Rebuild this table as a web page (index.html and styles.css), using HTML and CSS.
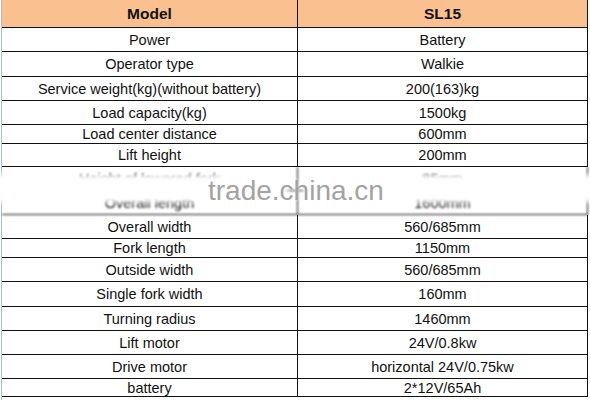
FILE: index.html
```html
<!DOCTYPE html>
<html>
<head>
<meta charset="utf-8">
<link rel="stylesheet" href="styles.css">
</head>
<body>
<div class="sheet">
  <div class="grid">
    <div class="cell head">Model</div><div class="cell head r">SL15</div>
    <div class="cell">Power</div><div class="cell r">Battery</div>
    <div class="cell">Operator type</div><div class="cell r">Walkie</div>
    <div class="cell">Service weight(kg)(without battery)</div><div class="cell r">200(163)kg</div>
    <div class="cell">Load capacity(kg)</div><div class="cell r">1500kg</div>
    <div class="cell">Load center distance</div><div class="cell r">600mm</div>
    <div class="cell">Lift height</div><div class="cell r">200mm</div>
    <div class="cell soft">Height of lowered fork</div><div class="cell r soft">85mm</div>
    <div class="cell soft">Overall length</div><div class="cell r soft">1600mm</div>
    <div class="cell">Overall width</div><div class="cell r">560/685mm</div>
    <div class="cell">Fork length</div><div class="cell r">1150mm</div>
    <div class="cell">Outside width</div><div class="cell r">560/685mm</div>
    <div class="cell">Single fork width</div><div class="cell r">160mm</div>
    <div class="cell">Turning radius</div><div class="cell r">1460mm</div>
    <div class="cell">Lift motor</div><div class="cell r">24V/0.8kw</div>
    <div class="cell">Drive motor</div><div class="cell r">horizontal 24V/0.75kw</div>
    <div class="cell">battery</div><div class="cell r">2*12V/65Ah</div>
  </div>
  <div class="haze haze-left"></div>
  <div class="haze haze-right"></div>
  <div class="watermark">trade.china.cn</div>
</div>
</body>
</html>
```
FILE: styles.css
```css
html, body {
  margin: 0;
  padding: 0;
  background: #fff;
}
body {
  width: 590px;
  height: 400px;
  overflow: hidden;
  font-family: "Liberation Sans", Arial, sans-serif;
  color: #111;
}
.sheet {
  position: relative;
  margin-left: 1px;
  border-left: 1px solid #a9bedb;
  height: 400px;
}
.grid {
  display: grid;
  grid-template-columns: 296px 290px;
  grid-template-rows: 28px 24px 25px 24px 24px 19px 23px 24px 24px 24px 19px 24px 25px 24px 24px 24px 18px;
}
.cell {
  box-sizing: border-box;
  border-bottom: 1px solid #111;
  border-right: 1px solid #111;
  display: flex;
  align-items: center;
  justify-content: center;
  font-size: 14.5px;
  white-space: nowrap;
  overflow: hidden;
}
.head {
  background: #fac090;
  font-weight: bold;
  font-size: 15.5px;
}
.soft {
  filter: blur(1.2px);
}
.haze {
  position: absolute;
  top: 175px;
  height: 27px;
  background: #fff;
  filter: blur(2.5px);
}
.haze-left {
  left: -8px;
  width: 294px;
}
.haze-right {
  left: 302px;
  width: 300px;
}
.watermark {
  position: absolute;
  left: 206px;
  top: 177px;
  font-size: 28px;
  line-height: 28px;
  color: #a3a3a3;
  text-shadow: 0 0 3px #fff;
  white-space: nowrap;
}
```
